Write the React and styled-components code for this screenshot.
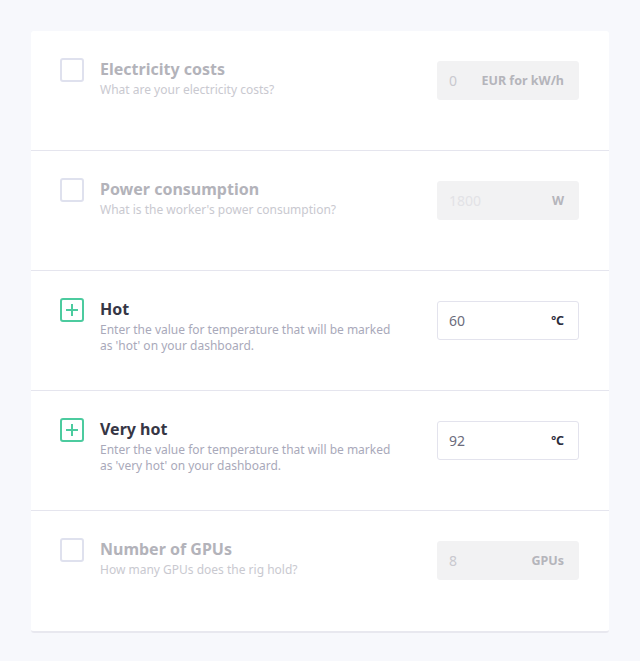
import React from "react";
import styled, { createGlobalStyle } from "styled-components";

const Global = createGlobalStyle`
  html, body { margin: 0; padding: 0; background: #f7f8fc; }
  body { font-family: "Noto Sans", "Open Sans", sans-serif; }
  * { box-sizing: border-box; }
`;

const Page = styled.div`
  padding: 31px 31px 30px 31px;
  background: #f7f8fc;
  min-height: 661px;
`;

const Card = styled.div`
  background: #fff;
  border-radius: 3px;
  border-bottom: 2px solid #e8e8ef;
`;

const Row = styled.div`
  height: 120px;
  display: flex;
  align-items: flex-start;
  padding: 27px 30px 0 29px;
  border-bottom: ${(p) => (p.$last ? "none" : "1px solid #e5e5ee")};
`;

const Box = styled.div`
  width: 24px;
  height: 24px;
  flex: none;
  border-radius: 3px;
  border: 2px solid ${(p) => (p.$checked ? "#4ccb9f" : "#dfe1ee")};
  display: flex;
  align-items: center;
  justify-content: center;
`;

const Text = styled.div`
  margin-left: 16px;
  flex: 1;
  min-width: 0;
  max-width: 302px;
`;

const Title = styled.div`
  font-size: 16px;
  font-weight: 700;
  line-height: 22px;
  color: ${(p) => (p.$active ? "#363645" : "#b3b3ba")};
`;

const Sub = styled.div`
  font-size: 12px;
  line-height: 16px;
  margin-top: 2px;
  color: ${(p) => (p.$active ? "#a9a9ba" : "#c9c9d0")};
`;

const Field = styled.div`
  margin-left: auto;
  margin-top: 3px;
  width: 142px;
  height: 39px;
  flex: none;
  border-radius: 3px;
  display: flex;
  align-items: center;
  justify-content: space-between;
  padding: 0 14px 0 11px;
  background: ${(p) => (p.$active ? "#fff" : "#f2f2f3")};
  border: 1px solid ${(p) => (p.$active ? "#e3e3ed" : "#f2f2f3")};
`;

const Value = styled.span`
  font-size: 14px;
  color: ${(p) => (p.$active ? "#6c6c7c" : p.$faint ? "#e2e2e6" : "#c9c9cf")};
`;

const Unit = styled.span`
  font-weight: 700;
  font-size: 12.5px;
  color: ${(p) => (p.$active ? "#2d2d3c" : "#b5b5bb")};
`;

const Plus = () => (
  <svg width="14" height="14" viewBox="0 0 14 14">
    <path d="M7 1v12M1 7h12" stroke="#4ccb9f" strokeWidth="2" fill="none" />
  </svg>
);

const rows = [
  { title: "Electricity costs", sub: "What are your electricity costs?", value: "0", unit: "EUR for kW/h" },
  { title: "Power consumption", sub: "What is the worker's power consumption?", value: "1800", unit: "W", faint: true },
  { title: "Hot", sub: "Enter the value for temperature that will be marked as 'hot' on your dashboard.", value: "60", unit: "ºC", active: true },
  { title: "Very hot", sub: "Enter the value for temperature that will be marked as 'very hot' on your dashboard.", value: "92", unit: "ºC", active: true },
  { title: "Number of GPUs", sub: "How many GPUs does the rig hold?", value: "8", unit: "GPUs" },
];

export default function App() {
  return (
    <Page>
      <Global />
      <Card>
        {rows.map((r, i) => (
          <Row key={r.title} $last={i === rows.length - 1}>
            <Box $checked={r.active}>{r.active && <Plus />}</Box>
            <Text>
              <Title $active={r.active}>{r.title}</Title>
              <Sub $active={r.active}>{r.sub}</Sub>
            </Text>
            <Field $active={r.active}>
              <Value $active={r.active} $faint={r.faint}>{r.value}</Value>
              <Unit $active={r.active}>{r.unit}</Unit>
            </Field>
          </Row>
        ))}
      </Card>
    </Page>
  );
}
